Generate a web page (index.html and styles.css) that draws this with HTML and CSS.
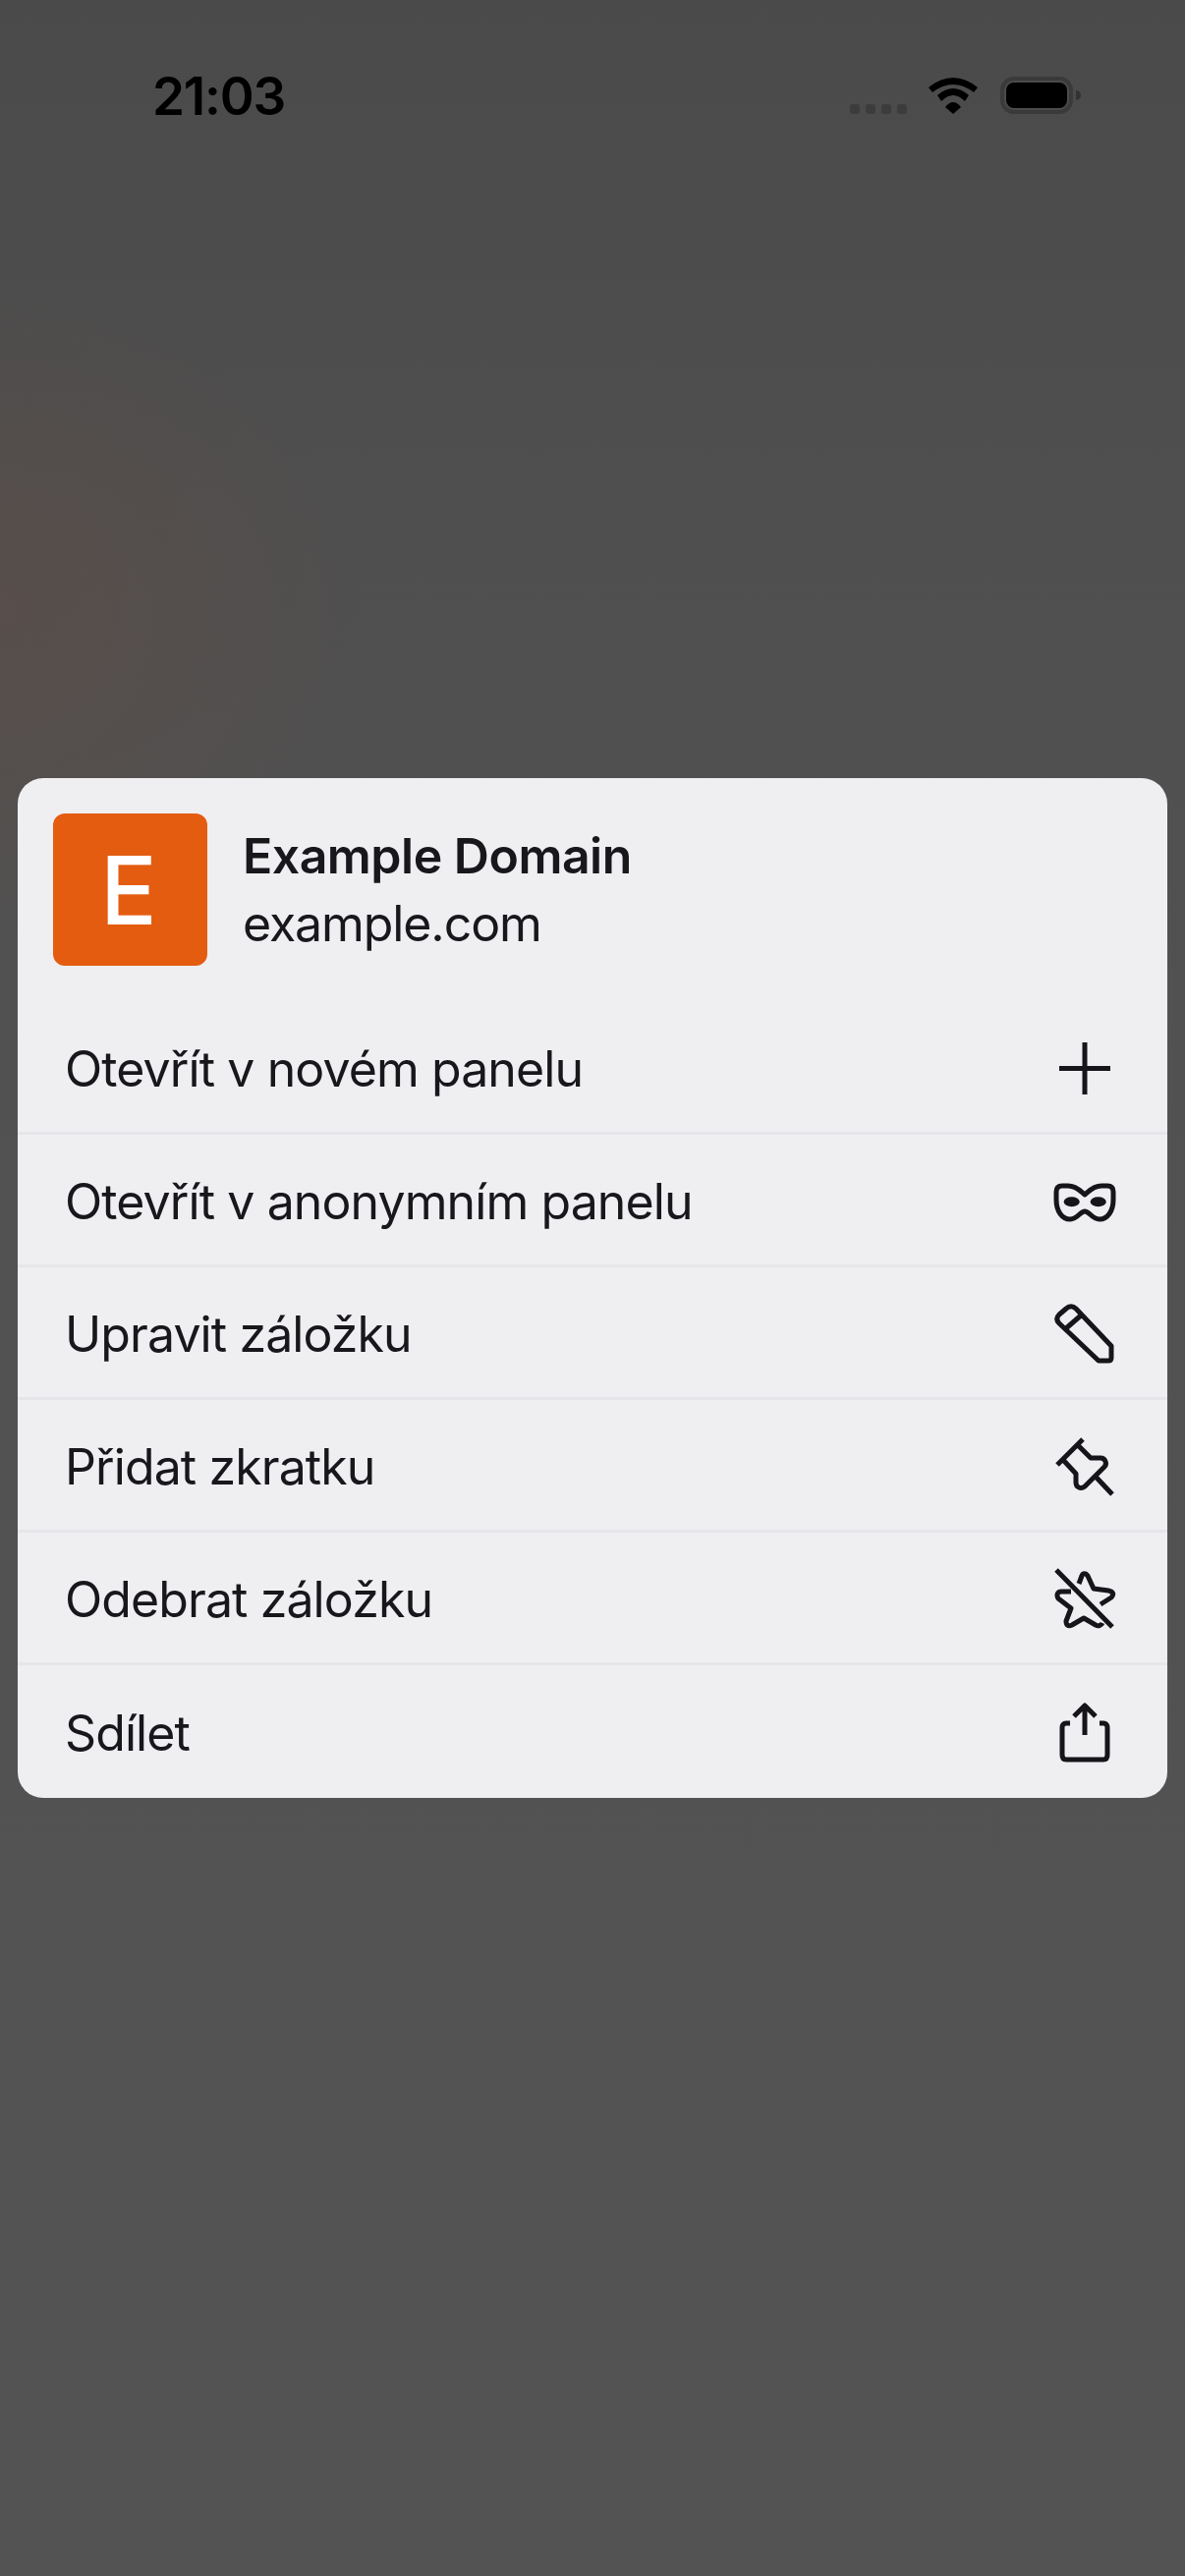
FILE: index.html
```html
<!DOCTYPE html>
<html lang="cs">
<head>
  <meta charset="UTF-8">
  <title>Example Domain</title>
  <meta name="viewport" content="width=device-width, initial-scale=1.0">
  <link rel="stylesheet" href="styles.css">
</head>
<body>
  <div class="status-bar">
    <span class="clock">21:03</span>
    <div class="status-icons">
      <div class="signal"><i></i><i></i><i></i><i></i></div>
      <svg class="wifi" viewBox="0 0 50 37">
        <path d="M0 10Q25 -10 50 10L46 15Q25 -1 4 15Z"/>
        <path d="M9 18Q25 4 41 18L37 24Q25 12 13 24Z"/>
        <path d="M17 30Q25 20 33 30L25 37Z"/>
      </svg>
      <div class="battery">
        <div class="battery-body"><div class="battery-fill"></div></div>
        <div class="battery-cap"></div>
      </div>
    </div>
  </div>

  <div class="sheet">
    <div class="sheet-head">
      <div class="favicon">E</div>
      <div class="site">
        <div class="site-title">Example Domain</div>
        <div class="site-url">example.com</div>
      </div>
    </div>

    <div class="menu-item">
      <span>Otevřít v novém panelu</span>
      <svg class="icon" viewBox="0 0 64 64"><path d="M32 7V60M6 33.500H58"/></svg>
    </div>
    <div class="menu-item">
      <span>Otevřít v anonymním panelu</span>
      <svg class="icon" viewBox="0 0 64 64">
        <path d="M32 27C28 24 24 18 15 18H9C5 18 3 20 3 24V32C3 44 9 52 17 52C25 52 27 44 32 44C37 44 39 52 47 52C55 52 61 44 61 32V24C61 20 59 18 55 18H49C40 18 36 24 32 27Z"/>
        <ellipse class="solid" cx="18.700" cy="34.300" rx="8" ry="5"/>
        <ellipse class="solid" cx="45.700" cy="34.300" rx="8" ry="5"/>
      </svg>
    </div>
    <div class="menu-item">
      <span>Upravit záložku</span>
      <svg class="icon" viewBox="0 0 64 64"><path d="M59 46V58C59 60 58 61 56 61H46L6 23C3 20 3 17 6 14L13 8C16 5 20 5 23 8ZM13 28L28 15"/></svg>
    </div>
    <div class="menu-item">
      <span>Přidat zkratku</span>
      <svg class="icon" viewBox="0 0 64 64"><path d="M30 6L4 32M25 12L38 25H48C53 25 55 31 52 34L32 54C28 57 23 55 23 50V41L10 27M43 44L60 62"/></svg>
    </div>
    <div class="menu-item">
      <span>Odebrat záložku</span>
      <svg class="icon" viewBox="0 0 64 64"><path d="M3 4L60 62M26 18L29 10C30 7 33 7 35 10L41 23L56 25C61 26 62 29 59 32L48 39M18 26H8C4 26 3 30 5 33L18 43L13 56C13 60 15 62 19 60L31 53L43 60C46 62 49 60 50 58"/></svg>
    </div>
    <div class="menu-item">
      <span>Sdílet</span>
      <svg class="icon" viewBox="0 0 64 64"><path d="M32 35V5M21 16L32 5L43 16M17 23H13C10 23 9 25 9 27V55C9 58 10 60 13 60H51C54 60 55 58 55 55V27C55 25 54 23 51 23H47"/></svg>
    </div>
  </div>
</body>
</html>
```

FILE: styles.css
```css
body {
  margin: 0;
  height: 2622px;
  font-family: Inter, "Liberation Sans", sans-serif;
  color: #17171c;
  background:
    radial-gradient(ellipse 380px 340px at 0 620px, rgba(130, 70, 50, 0.16), rgba(130, 70, 50, 0) 100%),
    linear-gradient(#4a4a4a 0, #4f4f4f 500px, #515151 1000px, #535353 100%);
}

.status-bar {
  box-sizing: border-box;
  height: 116px;
  padding: 70px 106px 0 155px;
  display: flex;
  justify-content: space-between;
  align-items: flex-end;
}
.clock {
  font-size: 53px;
  line-height: 36px;
  font-weight: 600;
  letter-spacing: -1.2px;
  color: #000;
}
.status-icons {
  display: flex;
  align-items: flex-end;
}
.signal {
  display: flex;
  gap: 6px;
  margin-right: 22px;
}
.signal i {
  width: 10px;
  height: 10px;
  border-radius: 3px;
  background: #3c3c3c;
}
.wifi {
  width: 50px;
  height: 37px;
  margin-right: 23px;
  fill: #000;
}
.battery {
  display: flex;
  align-items: center;
  gap: 3px;
}
.battery-body {
  box-sizing: border-box;
  width: 74px;
  height: 38px;
  padding: 2px;
  border: 4px solid #3a3a3a;
  border-radius: 14px;
}
.battery-fill {
  height: 100%;
  border-radius: 8px;
  background: #000;
}
.battery-cap {
  width: 5px;
  height: 10px;
  border-radius: 0 5px 5px 0;
  background: #333;
}

.sheet {
  box-sizing: border-box;
  height: 1038px;
  margin: 676px 18px 0;
  background: #efeff2;
  border-radius: 26px;
  overflow: hidden;
}
.sheet-head {
  display: flex;
  align-items: center;
  gap: 36px;
  padding: 36px 36px 37px;
}
.favicon {
  box-sizing: border-box;
  width: 157px;
  height: 155px;
  padding-right: 3px;
  border-radius: 12px;
  background: #e45c10;
  color: #fff;
  font-size: 96px;
  font-weight: 500;
  display: flex;
  align-items: center;
  justify-content: center;
}
.site-title {
  font-size: 50px;
  line-height: 67px;
  font-weight: 600;
  letter-spacing: -0.5px;
}
.site-url {
  padding-top: 2px;
  font-size: 50px;
  line-height: 67px;
  letter-spacing: -1.1px;
}

.menu-item {
  box-sizing: border-box;
  height: 135px;
  padding: 0 52px 0 48px;
  display: flex;
  align-items: center;
  justify-content: space-between;
  font-size: 50px;
  letter-spacing: -0.9px;
  border-bottom: 3px solid #e6e6ea;
}
.menu-item span {
  padding-top: 3px;
}
.menu-item:last-child {
  border-bottom: none;
}
.icon {
  width: 64px;
  height: 64px;
  fill: none;
  stroke: #15151a;
  stroke-width: 5;
  stroke-linejoin: round;
}
.icon .solid {
  fill: #15151a;
  stroke: none;
}
```
